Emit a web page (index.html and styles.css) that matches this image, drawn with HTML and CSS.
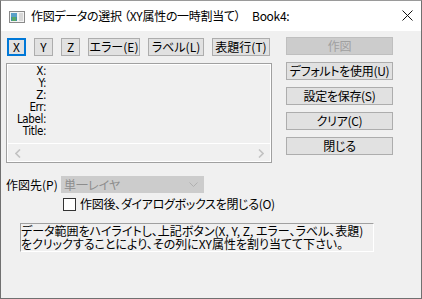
FILE: index.html
```html
<!DOCTYPE html>
<html lang="ja">
<head>
<meta charset="utf-8">
<link rel="stylesheet" href="styles.css">
</head>
<body>
<div class="win">
  <div class="titlebar">
    <svg class="appicon" width="16" height="12" viewBox="0 0 16 12">
      <rect x="0.5" y="0.5" width="15" height="11" fill="#f4f4f4" stroke="#8a8a8a"/>
      <rect x="2" y="2" width="6" height="8" fill="#3c8fa8"/>
      <rect x="2" y="2" width="6" height="4" fill="#5aa0c8"/>
      <rect x="3" y="6" width="4" height="4" fill="#58a868"/>
      <rect x="10" y="2" width="4" height="8" fill="#d8d8d8"/>
    </svg>
    <span class="title">作図データの選択 （XY属性の一時割当て）　Book4:</span>
    <svg class="close" width="11" height="11" viewBox="0 0 11 11">
      <path d="M0.5 0.5 L10.5 10.5 M10.5 0.5 L0.5 10.5" stroke="#111" stroke-width="1"/>
    </svg>
  </div>
  <div class="client">
    <div class="top">
      <div class="leftcol">
        <div class="btnrow">
          <div class="btn sel w19">X</div>
          <div class="btn w19">Y</div>
          <div class="btn w19">Z</div>
          <div class="btn w52">エラー(E)</div>
          <div class="btn w56">ラベル(L)</div>
          <div class="btn w58">表題行(T)</div>
        </div>
        <div class="listbox">
          <div class="fields">
            <div class="f">X:</div>
            <div class="f">Y:</div>
            <div class="f">Z:</div>
            <div class="f">Err:</div>
            <div class="f lab">Label:</div>
            <div class="f">Title:</div>
          </div>
          <div class="hscroll">
            <svg width="6" height="9" viewBox="0 0 6 9"><path d="M5 0.5 L1 4.5 L5 8.5" fill="none" stroke="#c2c2c2" stroke-width="1.6"/></svg>
            <svg width="6" height="9" viewBox="0 0 6 9"><path d="M1 0.5 L5 4.5 L1 8.5" fill="none" stroke="#c2c2c2" stroke-width="1.6"/></svg>
          </div>
        </div>
      </div>
      <div class="rightcol">
        <div class="btn rb dis">作図</div>
        <div class="btn rb">デフォルトを使用(U)</div>
        <div class="btn rb">設定を保存(S)</div>
        <div class="btn rb">クリア(C)</div>
        <div class="btn rb">閉じる</div>
      </div>
    </div>
    <div class="plotrow">
      <span class="plotlabel">作図先(P)</span>
      <div class="select">
        <span>単一レイヤ</span>
        <svg width="9" height="5" viewBox="0 0 9 5"><path d="M0.5 0.5 L4.5 4.5 L8.5 0.5" fill="none" stroke="#b0b0b0" stroke-width="1"/></svg>
      </div>
    </div>
    <div class="chkrow">
      <span class="box"></span>
      <span class="chktext">作図後、ダイアログボックスを閉じる(O)</span>
    </div>
    <div class="info">
      <div class="line">データ範囲をハイライトし、上記ボタン(X, Y, Z, エラー、ラベル、表題)</div>
      <div class="line">をクリックすることにより、その列にXY属性を割り当てて下さい。</div>
    </div>
  </div>
</div>
</body>
</html>
```

FILE: styles.css
```css
* { box-sizing: border-box; }
html, body { margin: 0; padding: 0; }
body {
  width: 422px;
  height: 299px;
  overflow: hidden;
  font-family: "Noto Sans CJK JP", sans-serif;
  font-feature-settings: "palt";
  color: #000;
}
.win {
  width: 422px;
  height: 299px;
  border: 1px solid #707070;
  border-top-color: #9a9a9a;
  background: #f0f0f0;
  display: flex;
  flex-direction: column;
}
.titlebar {
  height: 30px;
  background: #fff;
  display: flex;
  align-items: center;
  padding-left: 8px;
  position: relative;
}
.appicon { flex: none; margin-top: 1px; }
.title {
  margin-left: 6px;
  font-size: 12px;
  line-height: 14px;
  white-space: pre;
  margin-top: -1px;
  letter-spacing: -0.3px;
}
.close { position: absolute; left: 401px; top: 9px; }
.client {
  padding: 6px 0 0 5px;
  flex: 1;
  display: flex;
  flex-direction: column;
}
.top { display: flex; gap: 14px; }
.leftcol { width: 266px; display: flex; flex-direction: column; }
.btnrow {
  display: flex;
  gap: 8px;
  padding-left: 1px;
  margin-top: 1px;
  height: 18px;
}
.btn {
  height: 18px;
  background: #e1e1e1;
  border: 1px solid #adadad;
  font-size: 12px;
  line-height: 16px;
  text-align: center;
  white-space: nowrap;
}
.btn.sel { border: 2px solid #0078d7; line-height: 14px; }
.w19 { width: 19px; }
.w52 { width: 52px; }
.w56 { width: 56px; }
.w58 { width: 58px; }
.listbox {
  margin-top: 7px;
  height: 100px;
  border: 1px solid #a0a0a0;
  background: #f0f0f0;
  box-shadow: inset 0 0 0 1px #fff;
  display: flex;
  flex-direction: column;
}
.fields {
  height: 80px;
  border-bottom: 1px solid #fff;
  padding-top: 1px;
}
.f {
  width: 39px;
  text-align: right;
  font-family: "DejaVu Sans Condensed", "Liberation Sans", sans-serif;
  font-size: 11.5px;
  line-height: 12px;
  height: 12px;
  letter-spacing: -0.4px;
}
.hscroll {
  flex: 1;
  display: flex;
  justify-content: space-between;
  align-items: center;
  padding: 0 7px 0 8px;
}
.rightcol {
  width: 107px;
  display: flex;
  flex-direction: column;
  gap: 7px;
}
.rb { width: 107px; letter-spacing: -0.3px; }
.dis { background: #cccccc; border-color: #bfbfbf; color: #a0a0a0; }
.plotrow {
  margin-top: 13px;
  display: flex;
  align-items: center;
  height: 17px;
}
.plotlabel { font-size: 12px; line-height: 14px; width: 55px; }
.select {
  width: 143px;
  height: 17px;
  background: #cccccc;
  color: #8d8d8d;
  font-size: 12px;
  line-height: 17px;
  display: flex;
  justify-content: space-between;
  align-items: center;
  padding: 0 6px 0 3px;
}
.chkrow {
  margin-top: 4px;
  margin-left: 57px;
  display: flex;
  align-items: center;
  gap: 4px;
  font-size: 12px;
  line-height: 14px;
}
.chktext { letter-spacing: -0.3px; }
.box {
  width: 13px;
  height: 13px;
  border: 1px solid #333;
  background: #fff;
  flex: none;
}
.info {
  margin-top: 12px;
  margin-left: 14px;
  width: 354px;
  height: 29px;
  border-top: 1px solid #a0a0a0;
  border-left: 1px solid #a0a0a0;
  border-right: 1px solid #fff;
  border-bottom: 1px solid #fff;
  font-size: 12px;
  white-space: nowrap;
}
.line {
  height: 13px;
  line-height: 13px;
}
```
